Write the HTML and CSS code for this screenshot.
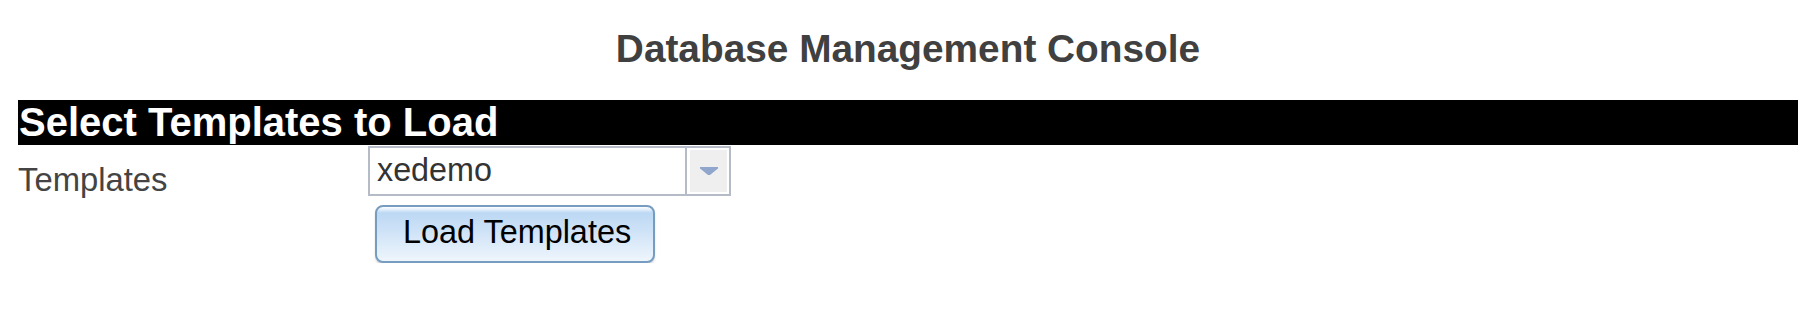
FILE: index.html
```html
<!DOCTYPE html>
<html>
<head>
<meta charset="utf-8">
<title>Database Management Console</title>
<link rel="stylesheet" href="styles.css">
</head>
<body>
<div class="page">
  <div class="title">Database Management Console</div>
  <div class="section-bar">Select Templates to Load</div>
  <div class="form-row">
    <div class="label">Templates</div>
    <div class="controls">
      <div class="combo">
        <span class="combo-input">xedemo</span>
        <span class="combo-arrow">
          <span class="arrow-box">
            <svg width="18" height="8" viewBox="0 0 18 8"><path d="M0 0H18V1.5L10 8H8L0 1.5Z" fill="#91a6cd"/></svg>
          </span>
        </span>
      </div>
      <button class="btn" type="button">Load Templates</button>
    </div>
  </div>
</div>
</body>
</html>
```
FILE: styles.css
```css
html, body {
  margin: 0;
  padding: 0;
  background: #ffffff;
}

body {
  font-family: "Liberation Sans", Arial, sans-serif;
}

.page {
  padding: 27px 15px 0 18px;
}

.title {
  text-align: center;
  font-size: 38.8px;
  font-weight: bold;
  color: #404040;
  line-height: normal;
}

.section-bar {
  margin-top: 29px;
  background: #000000;
  color: #ffffff;
  font-size: 40px;
  font-weight: bold;
  line-height: 45px;
  height: 45px;
  padding-left: 1px;
}

.form-row {
  display: flex;
  padding-top: 1px;
}

.label {
  width: 350px;
  font-size: 32.8px;
  color: #444444;
  margin-top: 15px;
}

.controls {
  display: flex;
  flex-direction: column;
  align-items: flex-start;
}

.combo {
  display: flex;
  box-sizing: border-box;
  width: 363px;
  height: 50px;
  border: 2px solid #b5bcc7;
  background: #ffffff;
}

.combo-input {
  flex: 1;
  font-size: 32.3px;
  color: #333333;
  padding: 4px 7px 0 7px;
  line-height: normal;
}

.combo-arrow {
  display: flex;
  width: 44px;
  box-sizing: border-box;
  border-left: 2px solid #b5bcc7;
  padding: 2px 2px 2px 3px;
  background: #ffffff;
}

.arrow-box {
  flex: 1;
  display: flex;
  align-items: center;
  justify-content: center;
  background: #efefef;
}

.btn {
  margin: 9px 0 0 7px;
  font-family: "Liberation Sans", Arial, sans-serif;
  font-size: 32.4px;
  line-height: normal;
  color: #000000;
  padding: 7px 22px 10px 26px;
  border: 2px solid #769dc0;
  border-radius: 8px;
  background-color: #bcd8f4;
  background-image: linear-gradient(#ffffff 0px, rgba(255,255,255,0) 6px, rgba(255,255,255,0.75) 100%);
  box-shadow: 0 2px 2px rgba(0,0,0,0.15);
  cursor: pointer;
}
```
